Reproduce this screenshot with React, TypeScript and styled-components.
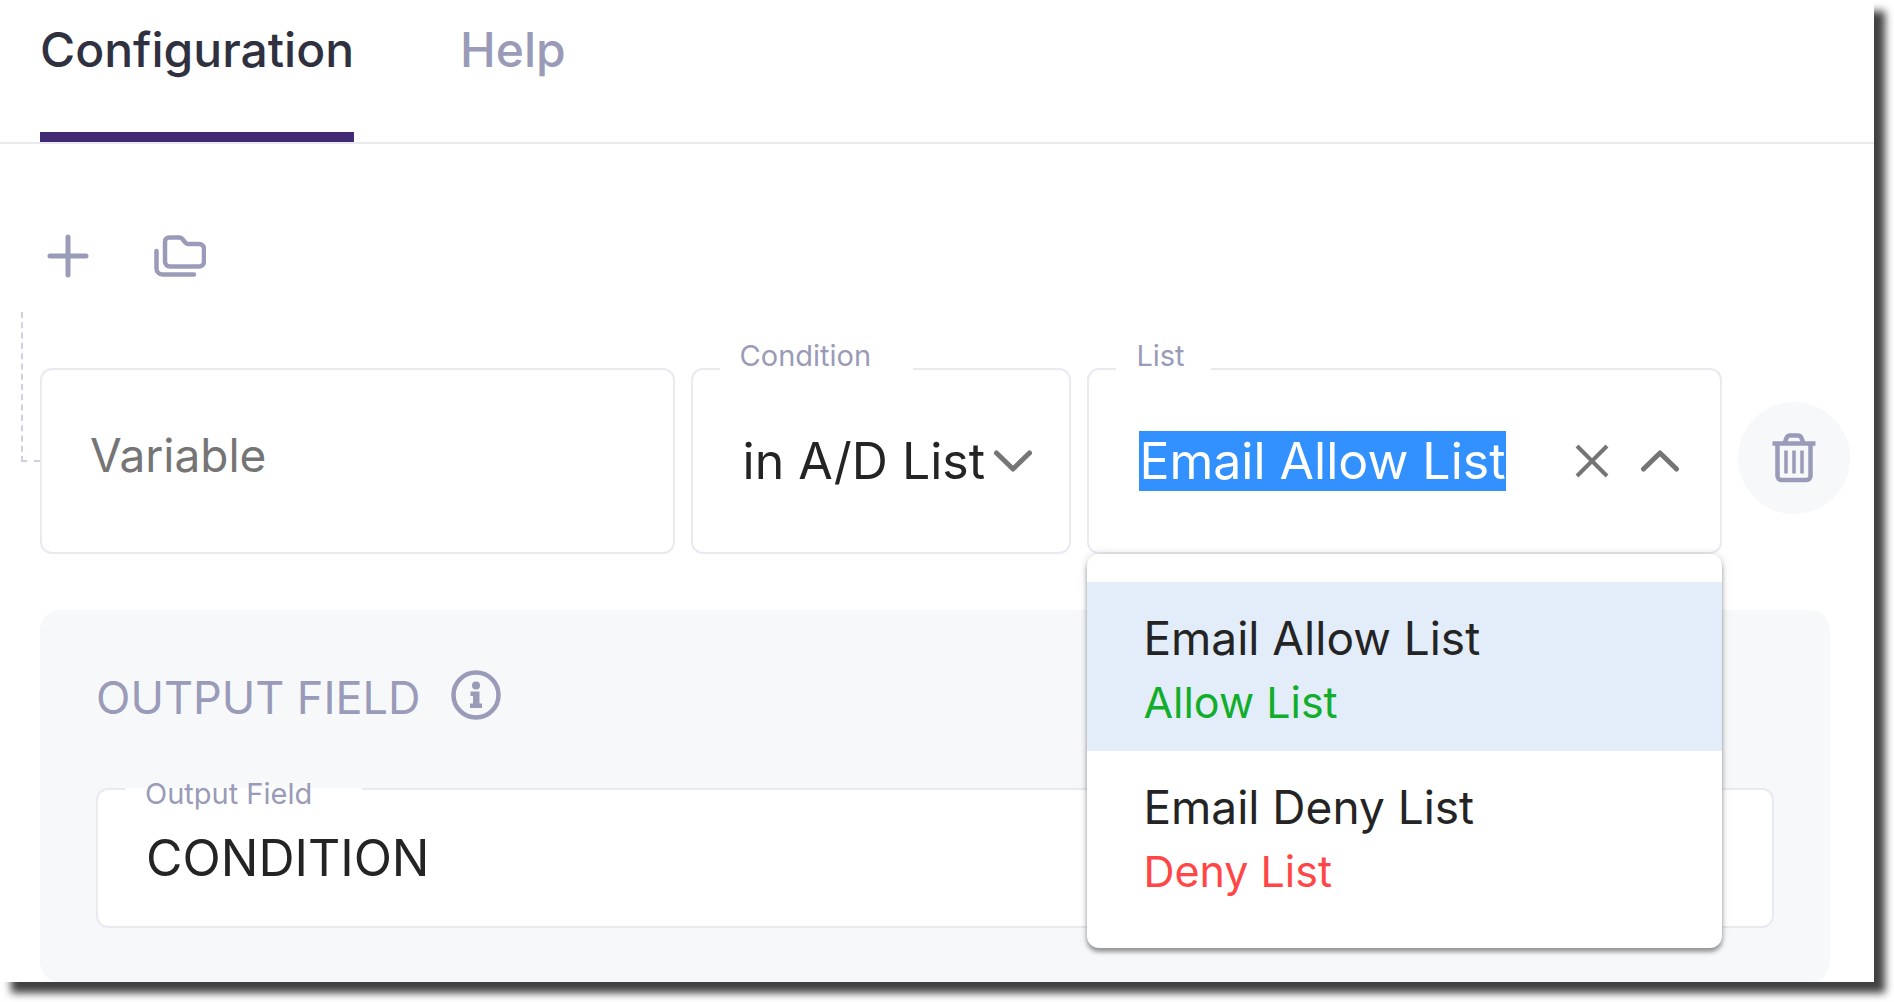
import React, { useEffect, useRef } from "react";
import styled, { createGlobalStyle } from "styled-components";

const INK = "#242424";
const MUTED = "#9a9bb8";
const LINE = "#e9e9f2";

const GlobalStyle = createGlobalStyle`
  *, *::before, *::after { box-sizing: border-box; }
  body {
    margin: 0;
    background: #fff;
    font-family: Inter, "Liberation Sans", sans-serif;
    color: ${INK};
  }
  button, input, select { font: inherit; color: inherit; }
  button { border: 0; background: none; padding: 0; cursor: pointer; }
`;

const Panel = styled.main`
  margin: 0 20px 20px 0;
  background: #fff;
  box-shadow: 11px 11px 8px rgba(0, 0, 0, 0.75);
`;

const Tabs = styled.div`
  display: flex;
  gap: 106px;
  padding: 0 40px;
  border-bottom: 2px solid ${LINE};
`;

const Tab = styled.button<{ $active?: boolean }>`
  padding: 22px 0 54px;
  border-bottom: 10px solid ${(p) => (p.$active ? "#432a75" : "transparent")};
  color: ${(p) => (p.$active ? "#2f3140" : MUTED)};
  font-size: 48px;
  font-weight: 500;
  line-height: 56px;
`;

const Body = styled.div`
  padding: 84px 24px 0 40px;
`;

const Toolbar = styled.div`
  display: flex;
  gap: 56px;
  margin-bottom: 84px;
`;

const ToolButton = styled.button`
  display: grid;
  place-items: center;
  width: 56px;
  height: 56px;
  color: ${MUTED};
`;

const ConditionRow = styled.div`
  position: relative;
  display: grid;
  grid-template-columns: 5fr 3fr 5fr auto;
  gap: 16px;

  &::before {
    content: "";
    position: absolute;
    left: -19px;
    top: -56px;
    width: 19px;
    height: 150px;
    border-left: 2px dashed #cfcfe2;
    border-bottom: 2px dashed #cfcfe2;
  }
`;

const Field = styled.div<{ $height: number; $inset?: number }>`
  position: relative;
  display: flex;
  align-items: center;
  min-width: 0;
  height: ${(p) => p.$height}px;
  padding: 0 40px 0 ${(p) => p.$inset ?? 48}px;
  border: 2px solid ${LINE};
  border-radius: 12px;
  background: #fff;
`;

/* The floating label opens a notch in the top border of its field. */
const FloatingLabel = styled.label<{ $lift: number; $tail: number }>`
  position: absolute;
  left: 27px;
  top: -${(p) => p.$lift}px;
  padding: 0 ${(p) => p.$tail}px 0 20px;
  color: ${MUTED};
  font-size: 29px;
  line-height: 34px;
  white-space: nowrap;

  &::before {
    content: "";
    position: absolute;
    inset: ${(p) => p.$lift - 2}px 0 auto;
    height: 2px;
    background: #fff;
    z-index: -1;
  }
  isolation: isolate;
`;

const TextInput = styled.input`
  flex: 1;
  min-width: 0;
  width: 100%;
  padding: 0;
  border: 0;
  outline: 0;
  background: transparent;
  font-size: 50px;
  line-height: 60px;

  &::selection { background: #3390ff; color: #fff; }
`;

const VariableInput = styled(TextInput)`
  padding-bottom: 12px;
  font-size: 46px;

  &::placeholder { color: #757575; opacity: 1; }
`;

const Select = styled.select`
  flex: 1;
  min-width: 0;
  padding: 0;
  border: 0;
  outline: 0;
  appearance: none;
  background: transparent;
  font-size: 50px;
  line-height: 60px;
`;

const SelectArrow = styled.span`
  position: absolute;
  right: 36px;
  display: flex;
  pointer-events: none;
  color: #757575;
`;

const FieldButton = styled.button`
  display: flex;
  margin-left: 30px;
  color: #757575;
`;

const DeleteButton = styled.button`
  display: grid;
  place-items: center;
  width: 112px;
  height: 112px;
  margin-top: 34px;
  border-radius: 50%;
  background: #f6f8fa;
  color: ${MUTED};
`;

const Menu = styled.ul`
  position: absolute;
  z-index: 2;
  left: -2px;
  right: -2px;
  top: 100%;
  margin: 2px 0 0;
  padding: 28px 0;
  list-style: none;
  border-radius: 12px;
  background: #fff;
  box-shadow: 0 4px 4px rgba(0, 0, 0, 0.36), 0 0 10px rgba(0, 0, 0, 0.14);
`;

const Option = styled.li<{ $selected?: boolean }>`
  display: flex;
  flex-direction: column;
  gap: 6px;
  padding: 26px 56px 21px;
  background: ${(p) => (p.$selected ? "#e3edf9" : "transparent")};
`;

const OptionName = styled.span`
  font-size: 46px;
  line-height: 60px;
`;

const OptionKind = styled.span<{ $kind: "allow" | "deny" }>`
  color: ${(p) => (p.$kind === "allow" ? "#12ad2b" : "#ff4646")};
  font-size: 43px;
  line-height: 56px;
`;

const OutputPanel = styled.section`
  margin: 56px 20px 0 0;
  padding: 60px 56px 54px;
  border-radius: 20px;
  background: #f6f8fa;
`;

const OutputHeader = styled.div`
  display: flex;
  align-items: flex-start;
  gap: 30px;
  margin-bottom: 62px;
  color: ${MUTED};
`;

const OutputTitle = styled.h2`
  margin: 0;
  font-size: 45px;
  font-weight: 400;
  line-height: 56px;
`;

const PlusIcon = () => (
  <svg width="44" height="44" viewBox="0 0 44 44" fill="none" stroke="currentColor" strokeWidth="5" strokeLinecap="round" aria-hidden="true">
    <path d="M22 3v38M4 22h36" />
  </svg>
);

const FoldersIcon = () => (
  <svg width="52" height="42" viewBox="0 0 52 42" fill="none" stroke="currentColor" strokeWidth="4.500" strokeLinecap="round" strokeLinejoin="round" aria-hidden="true">
    <path d="M15 2.500h10c1.600 0 2.600.5 3.500 1.600l3 3.600c.8.900 1.500 1.300 2.800 1.300H45a5 5 0 0 1 5 5v12.500a5 5 0 0 1-5 5H16a5 5 0 0 1-5-5V6.500a4 4 0 0 1 4-4z" />
    <path d="M2.500 16v17.500a6 6 0 0 0 6 6H40" />
  </svg>
);

const Chevron = ({ up }: { up?: boolean }) => (
  <svg width="40" height="24" viewBox="0 0 40 24" fill="none" stroke="currentColor" strokeWidth="5" strokeLinecap="round" strokeLinejoin="round" aria-hidden="true">
    <path d={up ? "M3.500 20 20 4l16.500 16" : "M3.500 4 20 20 36.500 4"} />
  </svg>
);

const CloseIcon = () => (
  <svg width="36" height="36" viewBox="0 0 36 36" fill="none" stroke="currentColor" strokeWidth="4" aria-hidden="true">
    <path d="M3 3l30 30M33 3 3 33" />
  </svg>
);

const TrashIcon = () => (
  <svg width="44" height="50" viewBox="0 0 44 50" fill="none" stroke="currentColor" aria-hidden="true">
    <path strokeWidth="4.500" d="M0.500 10.500h43" />
    <path strokeWidth="4.500" d="M12.500 10.500l2-5.500c.7-1.800 1.800-2.500 3.500-2.500h8c1.700 0 2.800.7 3.500 2.500l2 5.500" />
    <path strokeWidth="4.500" strokeLinejoin="round" d="M5.500 10.500V43a4 4 0 0 0 4 4h25a4 4 0 0 0 4-4V10.500" />
    <path strokeWidth="3.500" d="M14 17.500v23M22 17.500v23M30 17.500v23" />
  </svg>
);

const InfoIcon = () => (
  <svg width="50" height="50" viewBox="0 0 50 50" fill="none" aria-hidden="true">
    <circle cx="25" cy="25" r="22.500" stroke="currentColor" strokeWidth="4.500" />
    <circle cx="25" cy="15.500" r="4" fill="currentColor" />
    <path fill="currentColor" d="M19.500 21.500h9v12h2.500v4.500h-12v-4.500h3v-7.500h-2.500z" />
  </svg>
);

export default function App() {
  const listInput = useRef<HTMLInputElement>(null);

  useEffect(() => {
    listInput.current?.focus();
    listInput.current?.select();
  }, []);

  return (
    <>
      <GlobalStyle />
      <Panel>
        <Tabs role="tablist">
          <Tab type="button" role="tab" aria-selected="true" $active>
            Configuration
          </Tab>
          <Tab type="button" role="tab" aria-selected="false">
            Help
          </Tab>
        </Tabs>

        <Body>
          <Toolbar>
            <ToolButton type="button" aria-label="Add condition">
              <PlusIcon />
            </ToolButton>
            <ToolButton type="button" aria-label="Add group">
              <FoldersIcon />
            </ToolButton>
          </Toolbar>

          <ConditionRow>
            <Field $height={186}>
              <VariableInput type="text" placeholder="Variable" aria-label="Variable" />
            </Field>

            <Field $height={186} $inset={50}>
              <FloatingLabel htmlFor="condition" $lift={31} $tail={42}>
                Condition
              </FloatingLabel>
              <Select id="condition" defaultValue="in">
                <option value="in">in A/D List</option>
              </Select>
              <SelectArrow>
                <Chevron />
              </SelectArrow>
            </Field>

            <Field $height={186} $inset={50}>
              <FloatingLabel htmlFor="list" $lift={31} $tail={26}>
                List
              </FloatingLabel>
              <TextInput
                ref={listInput}
                id="list"
                type="text"
                role="combobox"
                aria-expanded="true"
                aria-controls="list-options"
                autoComplete="off"
                defaultValue="Email Allow List"
              />
              <FieldButton type="button" aria-label="Clear list">
                <CloseIcon />
              </FieldButton>
              <FieldButton type="button" aria-label="Close options">
                <Chevron up />
              </FieldButton>
              <Menu id="list-options" role="listbox" aria-label="List">
                <Option role="option" aria-selected="true" $selected>
                  <OptionName>Email Allow List</OptionName>
                  <OptionKind $kind="allow">Allow List</OptionKind>
                </Option>
                <Option role="option" aria-selected="false">
                  <OptionName>Email Deny List</OptionName>
                  <OptionKind $kind="deny">Deny List</OptionKind>
                </Option>
              </Menu>
            </Field>

            <DeleteButton type="button" aria-label="Delete condition">
              <TrashIcon />
            </DeleteButton>
          </ConditionRow>

          <OutputPanel>
            <OutputHeader>
              <OutputTitle>OUTPUT FIELD</OutputTitle>
              <InfoIcon />
            </OutputHeader>
            <Field $height={140}>
              <FloatingLabel htmlFor="output" $lift={13} $tail={50}>
                Output Field
              </FloatingLabel>
              <TextInput id="output" type="text" defaultValue="CONDITION" />
            </Field>
          </OutputPanel>
        </Body>
      </Panel>
    </>
  );
}
